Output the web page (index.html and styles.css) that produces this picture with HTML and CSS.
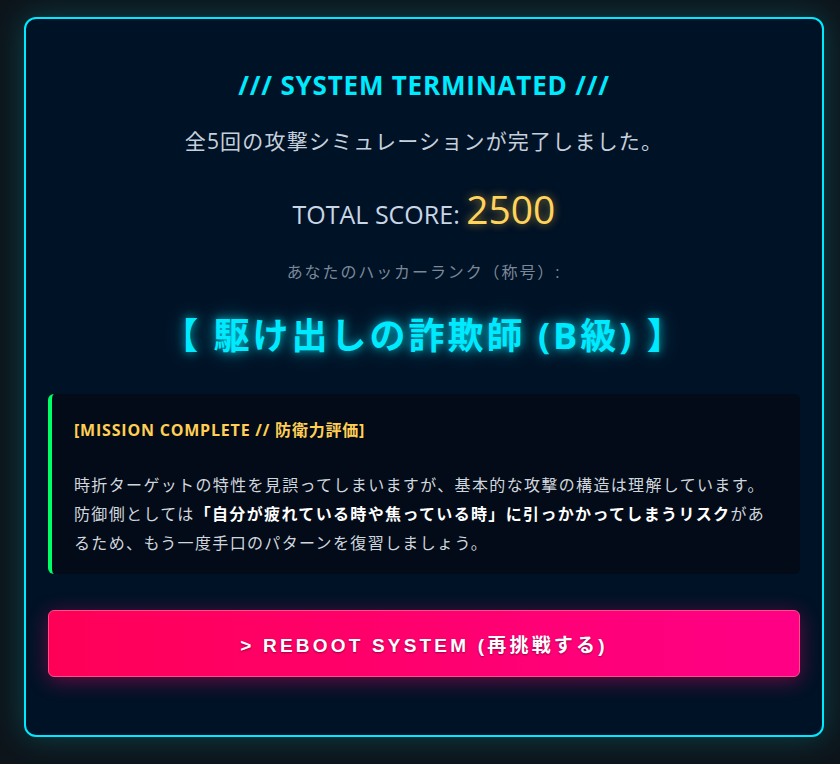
FILE: index.html
```html
<!DOCTYPE html>
<html lang="ja">
<head>
<meta charset="utf-8">
<link rel="stylesheet" href="styles.css">
</head>
<body>
<div class="card">
  <h2 class="title">/// SYSTEM TERMINATED ///</h2>
  <p class="sub">全5回の攻撃シミュレーションが完了しました。</p>
  <p class="score">TOTAL SCORE: <span class="num">2500</span></p>
  <p class="rank-label">あなたのハッカーランク（称号）:</p>
  <p class="rank">【 駆け出しの詐欺師 (B級) 】</p>
  <div class="report">
    <p class="report-head">[MISSION COMPLETE // 防衛力評価]</p>
    <p class="report-body">時折ターゲットの特性を見誤ってしまいますが、基本的な攻撃の構造は理解しています。防御側としては<strong>「自分が疲れている時や焦っている時」に引っかかってしまうリスク</strong>があるため、もう一度手口のパターンを復習しましょう。</p>
  </div>
  <button class="reboot">&gt; REBOOT SYSTEM (再挑戦する)</button>
</div>
</body>
</html>
```

FILE: styles.css
```css
html, body {
  margin: 0;
  padding: 0;
}
body {
  background: #0d151b;
  font-family: "Open Sans", "Noto Sans CJK JP", sans-serif;
  height: 764px;
  overflow: hidden;
}
.card {
  box-sizing: border-box;
  width: 800px;
  margin: 17px 0 0 24px;
  height: 720px;
  border: 2px solid #00eaff;
  border-radius: 12px;
  background: #001226;
  box-shadow: 0 0 30px rgba(0, 234, 255, 0.22);
  padding: 48px 22px 0;
  text-align: center;
}
.title {
  margin: 0;
  font-size: 26px;
  font-weight: 700;
  letter-spacing: 0.8px;
  color: #00eaff;
  line-height: 36px;
}
.sub {
  margin: 23px 0 0;
  font-size: 21px;
  letter-spacing: 1.2px;
  color: #c6d0dc;
  line-height: 30px;
}
.score {
  margin: 28px 0 0;
  font-size: 25px;
  color: #c8d6e6;
  line-height: 50px;
}
.num {
  font-size: 39px;
  color: #ffd35c;
  text-shadow: 0 0 8px rgba(255, 200, 60, 0.6);
}
.rank-label {
  margin: 21px 0 0;
  font-size: 16px;
  letter-spacing: 1.9px;
  color: #7b8898;
  line-height: 24px;
}
.rank {
  margin: 27px 0 0;
  font-size: 36px;
  font-weight: 700;
  letter-spacing: 3px;
  color: #00eaff;
  line-height: 50px;
  text-shadow: 0 0 10px rgba(0, 234, 255, 0.75), 0 0 22px rgba(0, 234, 255, 0.4);
}
.report {
  margin-top: 33px;
  background: #020b17;
  border-left: 4px solid #00ff66;
  border-radius: 6px;
  text-align: left;
  padding: 23px 20px 0 22px;
  height: 180px;
  box-sizing: border-box;
}
.report-head {
  margin: 0;
  font-size: 16px;
  font-weight: 700;
  letter-spacing: 0.8px;
  color: #ffcf55;
  line-height: 26px;
}
.report-body {
  margin: 28px 0 0;
  font-size: 16px;
  letter-spacing: 1.35px;
  color: #d0d6de;
  line-height: 29px;
}
.report-body strong {
  color: #ffffff;
}
.reboot {
  display: block;
  width: 100%;
  margin-top: 36px;
  height: 67px;
  border: 1px solid #ff4d8a;
  border-radius: 6px;
  background: linear-gradient(90deg, #ff0057, #ff0086);
  color: #ffffff;
  font-family: "Liberation Sans", "Noto Sans CJK JP", sans-serif;
  font-size: 19px;
  font-weight: 700;
  letter-spacing: 3.2px;
  text-shadow: 0 1px 2px rgba(0, 0, 0, 0.4);
  box-shadow: 0 4px 20px rgba(255, 0, 110, 0.4);
  cursor: pointer;
}
```
